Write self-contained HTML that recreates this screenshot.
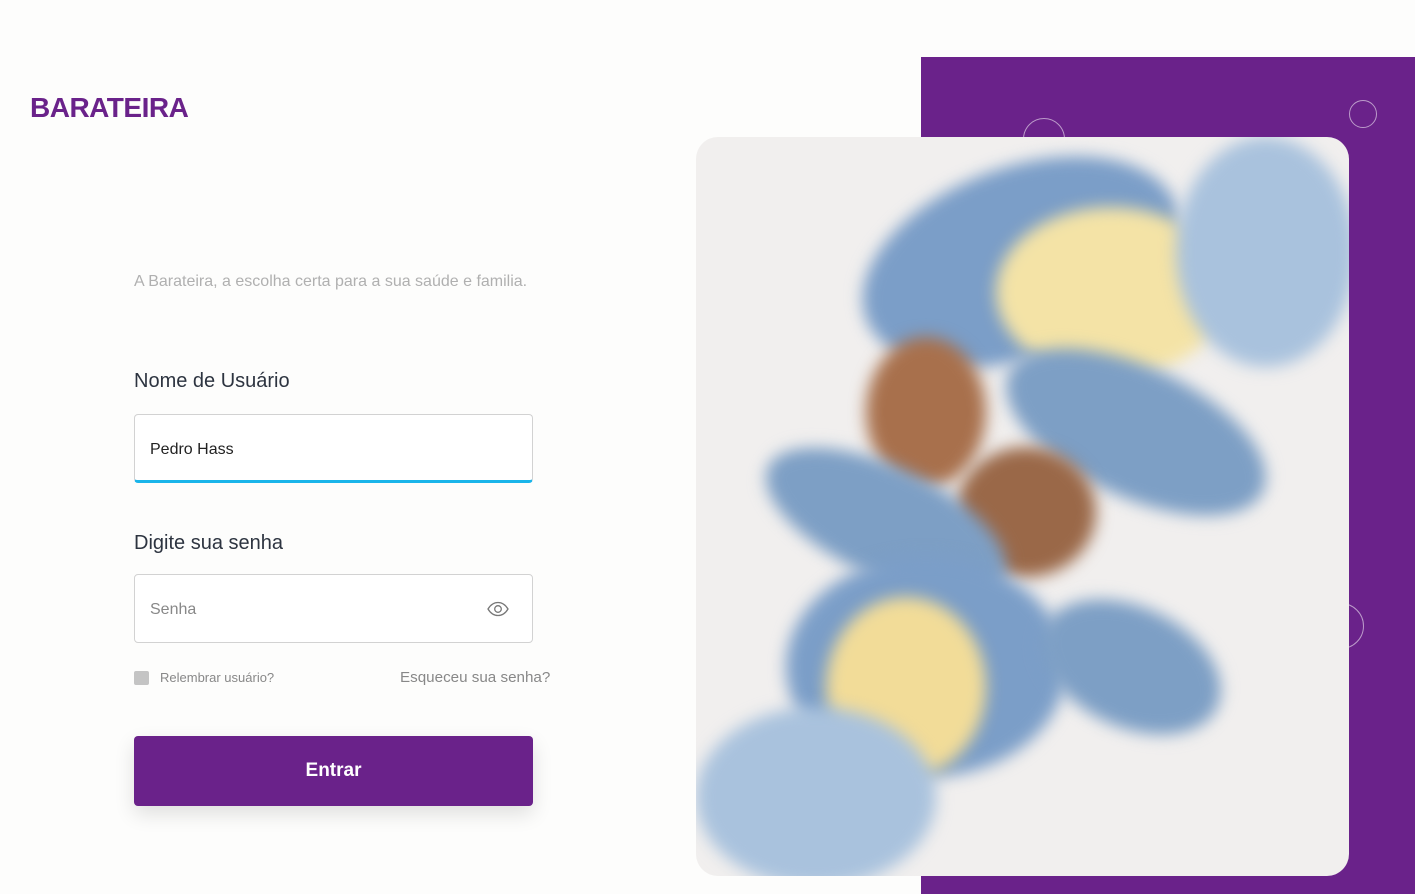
<!DOCTYPE html>
<html><head><meta charset="utf-8"><style>
body{margin:0;width:1415px;height:894px;background:#fdfdfc;position:relative;overflow:hidden;font-family:"Liberation Sans",sans-serif}
.abs{position:absolute}
.logo{left:30px;top:92px;font-size:28px;font-weight:bold;color:#6a228a;letter-spacing:-0.5px}
.tag{left:134px;top:273px;font-size:16px;color:#b0b0b0}
.lbl{left:134px;font-size:20px;color:#2d3440}
.inp{left:134px;width:399px;height:69px;border:1px solid #d2d2d2;border-radius:4px;background:#fff;box-sizing:border-box;font-size:16px;padding-left:15px;line-height:69px}
.btn{left:134px;top:736px;width:399px;height:70px;background:#6a228a;border-radius:4px;color:#fff;font-size:19px;font-weight:bold;text-align:center;line-height:70px;box-shadow:0 8px 20px rgba(0,0,0,.12)}
.purple{left:921px;top:57px;width:494px;height:837px;background:#6a228a}
.circ{border:1.5px solid rgba(255,255,255,.55);border-radius:50%}
.photo{left:696px;top:137px;width:653px;height:739px;border-radius:22px;overflow:hidden;background:#f1efee}
.b{position:absolute;border-radius:50%;filter:blur(8px)}
</style></head><body>
<div class="abs logo">BARATEIRA</div>
<div class="abs tag">A Barateira, a escolha certa para a sua saúde e familia.</div>
<div class="abs lbl" style="top:370px">Nome de Usuário</div>
<div class="abs inp" style="top:414px;border-bottom:3px solid #1ab5ea;color:#222">Pedro Hass</div>
<div class="abs lbl" style="top:532px">Digite sua senha</div>
<div class="abs inp" style="top:574px;color:#888">Senha</div>
<svg class="abs" style="left:487px;top:601px" width="22" height="16" viewBox="0 0 22 16"><path d="M1 8C4 3 7.5 1.5 11 1.5S18 3 21 8C18 13 14.5 14.5 11 14.5S4 13 1 8Z" fill="none" stroke="#777" stroke-width="1.3"/><circle cx="11" cy="8" r="3.3" fill="none" stroke="#777" stroke-width="1.3"/></svg>
<div class="abs" style="left:134px;top:671px;width:15px;height:14px;background:#c4c4c4;border-radius:2px"></div>
<div class="abs" style="left:160px;top:670px;font-size:13px;color:#888">Relembrar usuário?</div>
<div class="abs" style="left:400px;top:669px;font-size:15.2px;color:#888">Esqueceu sua senha?</div>
<div class="abs btn">Entrar</div>
<div class="abs purple"></div>
<div class="abs circ" style="left:1023px;top:118px;width:40px;height:40px"></div>
<div class="abs circ" style="left:1349px;top:100px;width:26px;height:26px"></div>
<div class="abs circ" style="left:1318px;top:603px;width:44px;height:44px"></div>
<div class="abs photo">
<div class="b" style="left:160px;top:30px;width:330px;height:190px;background:#7b9ec8;transform:rotate(-20deg)"></div>
<div class="b" style="left:300px;top:70px;width:230px;height:170px;background:#f4e3a6"></div>
<div class="b" style="left:480px;top:0;width:180px;height:230px;background:#a9c2dd"></div>
<div class="b" style="left:300px;top:230px;width:280px;height:130px;background:#7d9fc5;transform:rotate(25deg)"></div>
<div class="b" style="left:170px;top:200px;width:120px;height:150px;background:#a8704c"></div>
<div class="b" style="left:260px;top:310px;width:140px;height:130px;background:#9a6848"></div>
<div class="b" style="left:60px;top:330px;width:260px;height:110px;background:#7d9fc5;transform:rotate(25deg)"></div>
<div class="b" style="left:90px;top:420px;width:280px;height:220px;background:#7b9ec8"></div>
<div class="b" style="left:130px;top:460px;width:160px;height:180px;background:#f2dc98"></div>
<div class="b" style="left:340px;top:470px;width:190px;height:120px;background:#7d9fc5;transform:rotate(25deg)"></div>
<div class="b" style="left:0;top:570px;width:240px;height:180px;background:#a9c2dd"></div>
</div>
</body></html>
